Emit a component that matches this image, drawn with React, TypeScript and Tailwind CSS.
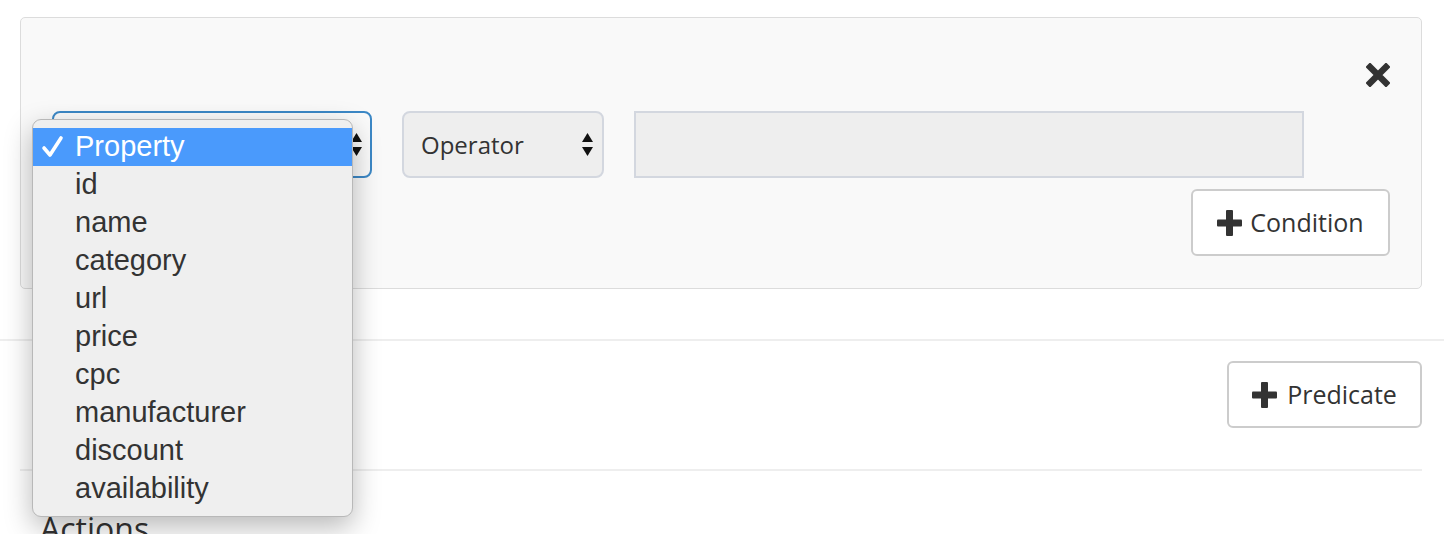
import React from "react";

const Arrows = () => (
  <svg width="11" height="24" viewBox="0 0 11 24" className="shrink-0">
    <path d="M5.5 0 L11 9 L0 9 Z" fill="#111" />
    <path d="M0 14 L11 14 L5.5 23 Z" fill="#111" />
  </svg>
);

const Plus = () => (
  <svg width="25" height="26" viewBox="0 0 25 26" className="shrink-0">
    <rect x="9" y="0" width="7" height="26" rx="1" fill="#333" />
    <rect x="0" y="9.5" width="25" height="7" rx="1" fill="#333" />
  </svg>
);

const Remove = () => (
  <svg width="24" height="24" viewBox="0 0 24 24">
    <path d="M4 4 L20 20 M20 4 L4 20" stroke="#333" strokeWidth="6.5" strokeLinecap="square" />
  </svg>
);

const Check = () => (
  <svg width="24" height="24" viewBox="0 0 24 24" className="absolute left-[8px] top-[7px]">
    <path d="M3 13 L9 20 L20 3" fill="none" stroke="#fff" strokeWidth="3.6" strokeLinecap="round" strokeLinejoin="round" />
  </svg>
);

const items = [
  "id",
  "name",
  "category",
  "url",
  "price",
  "cpc",
  "manufacturer",
  "discount",
  "availability",
];

export default function App() {
  return (
    <div
      className="relative w-[1444px] h-[534px] overflow-hidden bg-white text-[#333]"
      style={{ fontFamily: '"Open Sans", "Noto Sans", sans-serif' }}
    >
      <div className="pl-[20px] pr-[22px] pt-[17px]">
        <div className="border border-[#dcdcdc] rounded-[5px] bg-[#f9f9f9] pt-[45px] px-[31px] pb-[32px]">
          <div className="flex justify-end h-[24px]">
            <Remove />
          </div>
          <div className="flex gap-[30px] mt-[24px]">
            <div className="w-[320px] h-[67px] rounded-[8px] border-2 border-[#3c88c6] bg-[#fafafa] flex items-center justify-end pr-[8px]">
              <Arrows />
            </div>
            <div className="w-[202px] h-[67px] rounded-[8px] border-2 border-[#d3d7df] bg-[#eeeeee] flex items-center justify-between pl-[17px] pr-[9px]">
              <span className="text-[24px]">Operator</span>
              <Arrows />
            </div>
            <div className="w-[670px] h-[67px] border-2 border-[#d3d7df] bg-[#eeeeee]" />
          </div>
          <div className="flex justify-end mt-[11px]">
            <div className="h-[67px] w-[199px] rounded-[6px] border-2 border-[#cccccc] bg-white flex items-center justify-center gap-[8px] text-[25px]">
              <Plus />
              <span>Condition</span>
            </div>
          </div>
        </div>
        <div className="-ml-[20px] -mr-[22px] mt-[50px] h-[2px] bg-[#eeeeee]" />
        <div className="flex justify-end mt-[20px]">
          <div className="h-[67px] w-[195px] rounded-[6px] border-2 border-[#cccccc] bg-white flex items-center justify-center gap-[10px] text-[25px]">
            <Plus />
            <span>Predicate</span>
          </div>
        </div>
        <div className="mt-[41px] h-[2px] bg-[#eeeeee]" />
        <div className="pl-[20px] pt-[38px] text-[32px] leading-[40px]">Actions</div>
      </div>

      <div
        className="absolute left-[32px] top-[119px] w-[321px] h-[398px] rounded-[9px] border border-[#b8b8b8] bg-[#efefef] shadow-[0_10px_28px_rgba(0,0,0,0.28)] py-[8px]"
        style={{ fontFamily: '"Liberation Sans", Arial, sans-serif' }}
      >
        <div className="relative h-[38px] bg-[#4a9afc] text-white flex items-center pl-[42px] text-[29px]">
          <Check />
          <span>Property</span>
        </div>
        {items.map((it) => (
          <div key={it} className="h-[38px] flex items-center pl-[42px] text-[29px] text-[#333]">
            {it}
          </div>
        ))}
      </div>
    </div>
  );
}
